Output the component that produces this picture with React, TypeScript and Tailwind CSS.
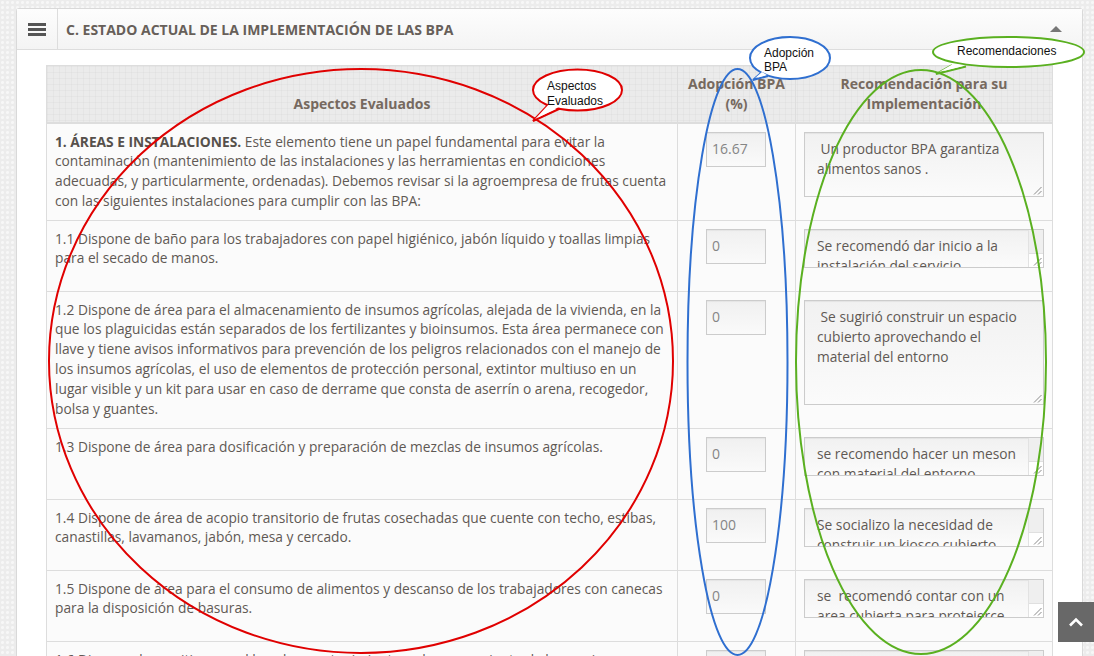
import React from "react";

type Row = {
  bold?: string;
  text: string;
  value: string;
  rec: string;
  h: number;
  scroll: boolean;
};

const rows: Row[] = [
  {
    bold: "1. ÁREAS E INSTALACIONES.",
    text:
      " Este elemento tiene un papel fundamental para evitar la contaminación (mantenimiento de las instalaciones y las herramientas en condiciones adecuadas, y particularmente, ordenadas). Debemos revisar si la agroempresa de frutas cuenta con las siguientes instalaciones para cumplir con las BPA:",
    value: "16.67",
    rec: " Un productor BPA garantiza alimentos sanos .",
    h: 65,
    scroll: false,
  },
  {
    text:
      "1.1 Dispone de baño para los trabajadores con papel higiénico, jabón líquido y toallas limpias para el secado de manos.",
    value: "0",
    rec: "Se recomendó dar inicio a la instalación del servicio sanitario para los trabajadores",
    h: 39,
    scroll: true,
  },
  {
    text:
      "1.2 Dispone de área para el almacenamiento de insumos agrícolas, alejada de la vivienda, en la que los plaguicidas están separados de los fertilizantes y bioinsumos. Esta área permanece con llave y tiene avisos informativos para prevención de los peligros relacionados con el manejo de los insumos agrícolas, el uso de elementos de protección personal, extintor multiuso en un lugar visible y un kit para usar en caso de derrame que consta de aserrín o arena, recogedor, bolsa y guantes.",
    value: "0",
    rec: " Se sugirió construir un espacio cubierto aprovechando el material del entorno",
    h: 105,
    scroll: false,
  },
  {
    text: "1.3 Dispone de área para dosificación y preparación de mezclas de insumos agrícolas.",
    value: "0",
    rec: "se recomendo hacer un meson con material del entorno",
    h: 39,
    scroll: true,
  },
  {
    text:
      "1.4 Dispone de área de acopio transitorio de frutas cosechadas que cuente con techo, estibas, canastillas, lavamanos, jabón, mesa y cercado.",
    value: "100",
    rec: "Se socializo la necesidad de construir un kiosco cubierto para el acopio",
    h: 39,
    scroll: true,
  },
  {
    text:
      "1.5 Dispone de área para el consumo de alimentos y descanso de los trabajadores con canecas para la disposición de basuras.",
    value: "0",
    rec: "se  recomendó contar con un area cubierta para protejerce del sol y la lluvia",
    h: 39,
    scroll: true,
  },
  {
    text:
      "1.6 Dispone de un sitio para el lavado, mantenimiento y almacenamiento de los equipos y herramientas de aplicación de insumos agrícolas.",
    value: "0",
    rec: "se recomendó adecuar un sitio para el lavado de equipos",
    h: 39,
    scroll: true,
  },
];

function Grip() {
  return (
    <svg className="absolute right-[1px] bottom-[1px]" width="9" height="9" viewBox="0 0 9 9">
      <line x1="8.5" y1="1" x2="1" y2="8.5" stroke="#8a8a8a" strokeWidth="1" />
      <line x1="8.5" y1="5" x2="5" y2="8.5" stroke="#8a8a8a" strokeWidth="1" />
    </svg>
  );
}

function FakeTextarea({ text, h, scroll }: { text: string; h: number; scroll: boolean }) {
  return (
    <div
      className="relative w-full mb-[15px] border border-[#cccccc] bg-linear-to-b from-[#f1f1f1] to-[#fbfbfb] shadow-[inset_0_1px_1px_rgba(0,0,0,0.06)] overflow-hidden"
      style={{ height: h }}
    >
      <div
        className={
          "whitespace-pre-wrap pt-[6px] pl-[12px] text-[13.75px] leading-[20px] text-[#5f5954] " +
          (scroll ? "pr-[27px]" : "pr-[10px]")
        }
      >
        {text}
      </div>
      {scroll && (
        <div className="absolute right-0 top-0 bottom-0 w-[15px] bg-white border-l border-[#e2e2e2]">
          <div className="h-[24px] bg-[#efefef] border-b border-[#e0e0e0]" />
        </div>
      )}
      <Grip />
    </div>
  );
}

function Overlay() {
  return (
    <svg
      className="absolute left-0 top-0 pointer-events-none"
      width="1094"
      height="656"
      viewBox="0 0 1094 656"
    >
      <ellipse cx="361" cy="361" rx="312" ry="292" fill="none" stroke="#e00000" strokeWidth="2" />
      <ellipse cx="737.5" cy="362" rx="50" ry="293" fill="none" stroke="#2f6fd0" strokeWidth="2" />
      <ellipse cx="921" cy="362" rx="125" ry="292" fill="none" stroke="#5ab020" strokeWidth="2" />

      {/* red bubble */}
      <path d="M549 104 L533 121 L560 108.5" fill="#ffffff" stroke="#e00000" strokeWidth="2" />
      <ellipse cx="577.5" cy="90" rx="44.5" ry="20.5" fill="#ffffff" stroke="#e00000" strokeWidth="2" />
      <path d="M550 103 L535 119 L559 107" fill="#ffffff" stroke="none" />
      <text x="547" y="90" fontFamily="'Liberation Sans', Arial, sans-serif" fontSize="12" fill="#111">
        Aspectos
      </text>
      <text x="547" y="105" fontFamily="'Liberation Sans', Arial, sans-serif" fontSize="12" fill="#111">
        Evaluados
      </text>

      {/* blue bubble */}
      <path d="M761 73 L753 80 L768 76" fill="#ffffff" stroke="#2f6fd0" strokeWidth="2" />
      <ellipse cx="790" cy="58" rx="40" ry="21" fill="#ffffff" stroke="#2f6fd0" strokeWidth="2" />
      <path d="M762 72 L755 78 L767 75" fill="#ffffff" stroke="none" />
      <text x="764" y="57" fontFamily="'Liberation Sans', Arial, sans-serif" fontSize="12" fill="#111">
        Adopción
      </text>
      <text x="764" y="71" fontFamily="'Liberation Sans', Arial, sans-serif" fontSize="12" fill="#111">
        BPA
      </text>

      {/* green bubble */}
      <path d="M952 65 L936 74 L966 66.5" fill="#ffffff" stroke="#5ab020" strokeWidth="2" />
      <ellipse cx="1008.5" cy="52" rx="75.5" ry="15" fill="#ffffff" stroke="#5ab020" strokeWidth="2" />
      <path d="M953 64 L939 72 L965 65.5" fill="#ffffff" stroke="none" />
      <text x="957" y="55" fontFamily="'Liberation Sans', Arial, sans-serif" fontSize="12" fill="#111">
        Recomendaciones
      </text>
    </svg>
  );
}

export default function App() {
  return (
    <div className="relative w-[1094px] h-[656px] overflow-hidden bg-[#ececec] bg-[image:radial-gradient(circle_at_center,rgba(255,255,255,0.6)_1px,transparent_2px)] bg-[size:5px_5px] font-['Open_Sans',sans-serif]">
      <div className="ml-[16px] mr-[11px] mt-[8px] border border-[#d9d9d9] rounded-t-[3px] bg-white">
        {/* header */}
        <div className="flex h-[41px] border-b border-[#dddddd] bg-linear-to-b from-[#fdfdfd] to-[#f4f4f4]">
          <div className="w-[41px] flex items-center justify-center border-r border-[#dddddd]">
            <div className="flex flex-col gap-[2px] mt-[1px]">
              <div className="w-[18px] h-[3px] bg-[#555555]" />
              <div className="w-[18px] h-[3px] bg-[#555555]" />
              <div className="w-[18px] h-[3px] bg-[#555555]" />
            </div>
          </div>
          <div className="flex-1 flex items-center pl-[8px] text-[14px] font-bold text-[#675f59]">
            C. ESTADO ACTUAL DE LA IMPLEMENTACIÓN DE LAS BPA
          </div>
          <div className="w-[44px] flex items-center justify-center pr-[8px]">
            <div className="w-0 h-0 border-l-[6px] border-r-[6px] border-b-[6px] border-l-transparent border-r-transparent border-b-[#777777]" />
          </div>
        </div>
        {/* body */}
        <div className="pt-[15px] pl-[29px] pr-[30px]">
          <table className="w-[1006px] table-fixed border-collapse border border-[#dddddd] text-[13.75px] leading-[19.8px]">
            <colgroup>
              <col className="w-[631px]" />
              <col className="w-[118px]" />
              <col className="w-[257px]" />
            </colgroup>
            <thead>
              <tr className="bg-[#ebebeb] bg-[image:linear-gradient(rgba(0,0,0,0.025)_1px,transparent_1px),linear-gradient(90deg,rgba(0,0,0,0.025)_1px,transparent_1px)] bg-[size:6px_6px]">
                <th className="align-bottom text-center text-[14px] font-bold text-[#76695f] px-[8px] py-[8px] border border-[#dddddd] border-b-2">
                  Aspectos Evaluados
                </th>
                <th className="align-bottom text-center text-[14px] font-bold text-[#76695f] px-[4px] py-[8px] border border-[#dddddd] border-b-2">
                  Adopción BPA
                  <br />
                  (%)
                </th>
                <th className="align-bottom text-center text-[14px] font-bold text-[#76695f] px-[8px] py-[8px] border border-[#dddddd] border-b-2">
                  Recomendación para su
                  <br />
                  Implementación
                </th>
              </tr>
            </thead>
            <tbody>
              {rows.map((r, i) => (
                <tr key={i} className="bg-[#fbfbfb]">
                  <td className="align-top px-[8px] py-[8px] border border-[#dddddd] text-[#5f5954]">
                    {r.bold && <b className="text-[#56504b]">{r.bold}</b>}
                    {r.text}
                  </td>
                  <td className="align-top px-[8px] py-[8px] border border-[#dddddd]">
                    <div className="flex justify-center">
                      <div className="w-[60px] h-[35px] border border-[#cccccc] bg-linear-to-b from-[#f0f0f0] to-[#fafafa] shadow-[inset_0_1px_1px_rgba(0,0,0,0.05)] pl-[5px] flex items-center text-[14px] text-[#858585] -ml-[1px]">
                        {r.value}
                      </div>
                    </div>
                  </td>
                  <td className="align-top px-[8px] py-[8px] border border-[#dddddd]">
                    <FakeTextarea text={r.rec} h={r.h} scroll={r.scroll} />
                  </td>
                </tr>
              ))}
            </tbody>
          </table>
        </div>
      </div>

      <Overlay />

      <div className="absolute left-[1058px] top-[602px] w-[36px] h-[40px] bg-[#686868] flex items-center justify-center">
        <svg width="16" height="10" viewBox="0 0 16 10">
          <path d="M2 8.5 L8 2.5 L14 8.5" fill="none" stroke="#ffffff" strokeWidth="2.6" />
        </svg>
      </div>
    </div>
  );
}
